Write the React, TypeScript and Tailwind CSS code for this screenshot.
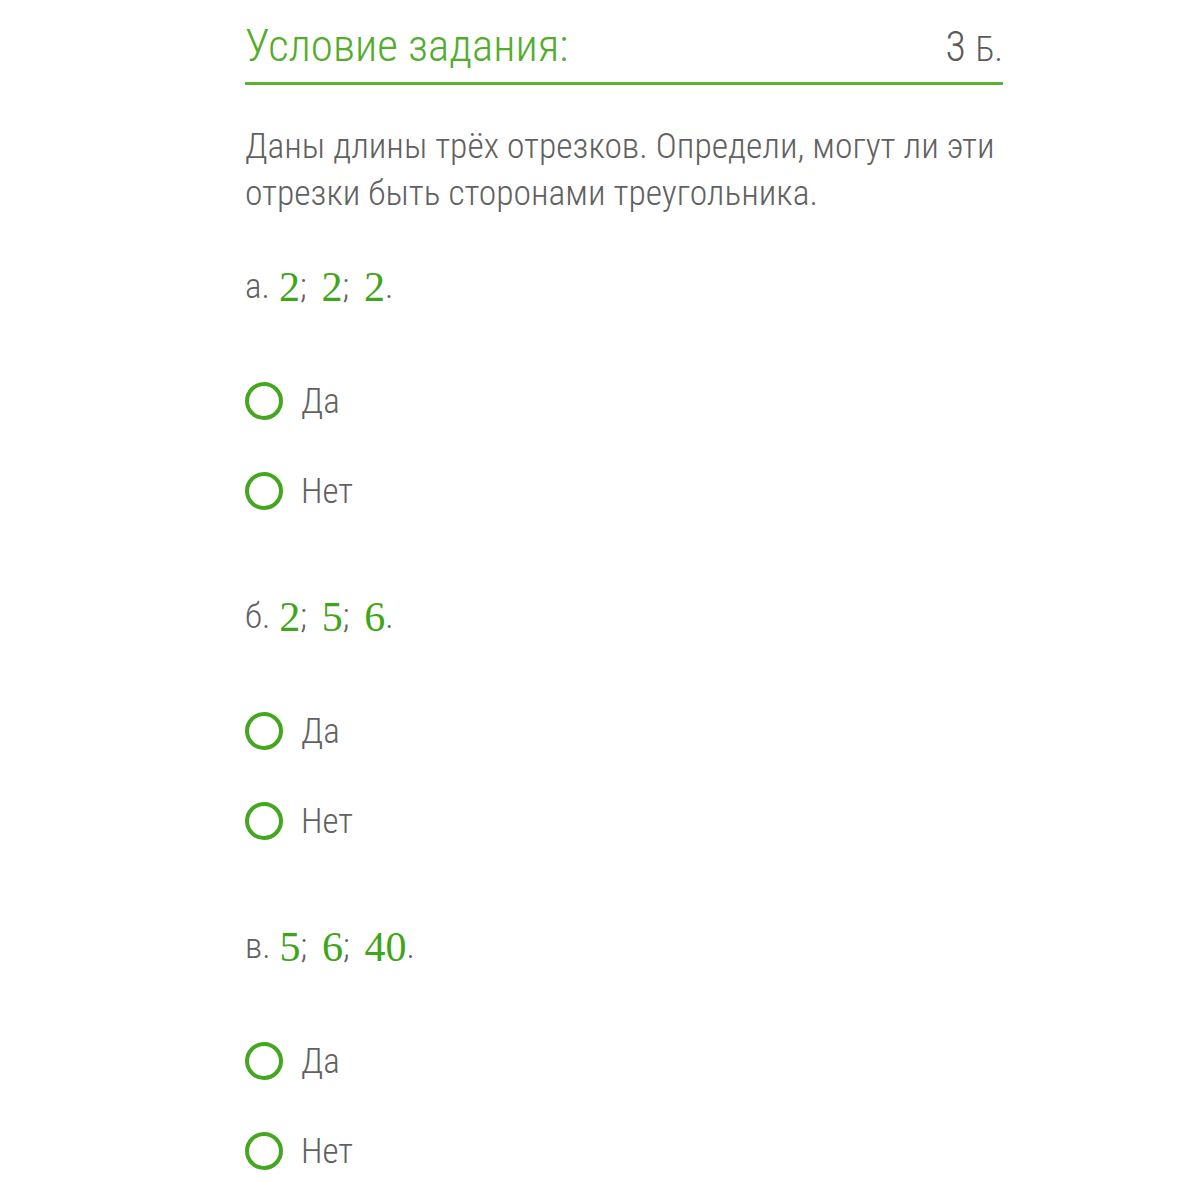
import React from "react";

const Radio = ({ label }: { label: string }) => (
  <div className="flex items-center h-[90px]">
    <div className="w-[38px] h-[38px] rounded-full border-[4px] border-[#45a61f] box-border" />
    <span className="ml-[18px] text-[35px] text-[#616161] leading-none font-stretch-condensed">{label}</span>
  </div>
);

const Num = ({ v }: { v: string }) => (
  <span className="text-[#3fa51a] text-[42px]" style={{ fontFamily: '"Liberation Serif", serif', fontWeight: 400 }}>{v}</span>
);

const Question = ({ letter, nums }: { letter: string; nums: string[] }) => (
  <div>
    <div className="h-[60px] flex items-center text-[35px] text-[#616161] font-stretch-condensed">
      <span>{letter}.</span>
      <span className="ml-[9px]"><Num v={nums[0]} /></span>
      <span>;</span>
      <span className="ml-[15px]"><Num v={nums[1]} /></span>
      <span>;</span>
      <span className="ml-[15px]"><Num v={nums[2]} /></span>
      <span>.</span>
    </div>
    <div className="mt-[39px]">
      <Radio label="Да" />
      <Radio label="Нет" />
    </div>
  </div>
);

export default function App() {
  return (
    <div className="w-[1198px] h-[1200px] bg-white overflow-hidden" style={{ fontFamily: 'Roboto, "Liberation Sans", sans-serif', fontWeight: 300 }}>
      <div className="ml-[245px] w-[758px] pt-[18px]">
        <div className="flex items-end justify-between h-[50px]">
          <span className="text-[45px] leading-none text-[#52ad2c] font-stretch-condensed">Условие задания:</span>
          <span className="text-[42px] leading-none text-[#5b5b5b] font-stretch-condensed">3 <span className="text-[35px]">Б.</span></span>
        </div>
        <div className="mt-[14px] h-[3px] bg-[#5cb332]" />
        <p className="mt-[38px] w-[770px] text-[35.6px] leading-[47px] text-[#616161] font-stretch-condensed">
          Даны длины трёх отрезков. Определи, могут ли эти отрезки быть сторонами треугольника.
        </p>
        <div className="mt-[40px]">
          <Question letter="а" nums={["2", "2", "2"]} />
          <div className="mt-[51px]"><Question letter="б" nums={["2", "5", "6"]} /></div>
          <div className="mt-[51px]"><Question letter="в" nums={["5", "6", "40"]} /></div>
        </div>
      </div>
    </div>
  );
}
